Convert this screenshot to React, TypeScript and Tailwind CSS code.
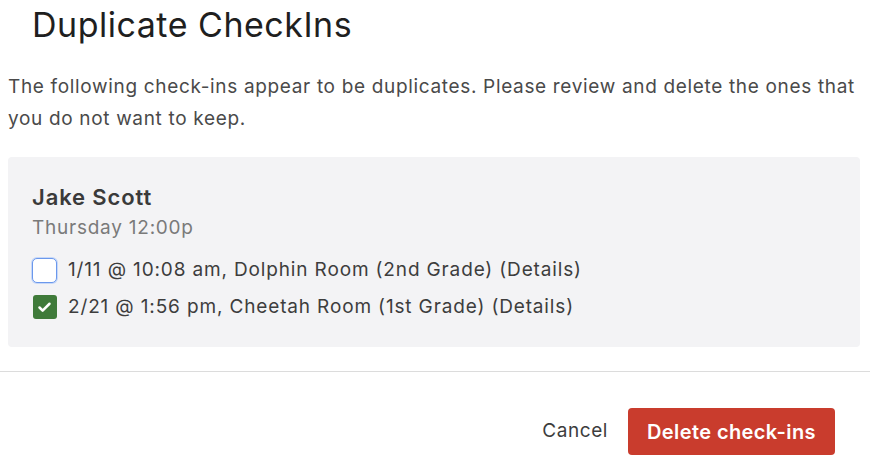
import { Check } from 'lucide-react';

const CHECKINS = [
  { id: 1, label: '1/11 @ 10:08 am, Dolphin Room (2nd Grade) (Details)', checked: false },
  { id: 2, label: '2/21 @ 1:56 pm, Cheetah Room (1st Grade) (Details)', checked: true },
];

export default function App() {
  return (
    <div className="h-[466px] w-[870px] overflow-hidden bg-white font-['Inter',sans-serif] text-[#333]">
      <h1 className="pl-[32px] pt-[4px] text-[34px] leading-[42px] tracking-[0.015em] text-[#1f1f1f]">
        Duplicate CheckIns
      </h1>

      <p className="mt-[25px] px-2 text-[19px] leading-8 tracking-[0.035em] text-[#4a4a4a]">
        The following check-ins appear to be duplicates. Please review and delete the ones that you do not want to keep.
      </p>

      <div className="ml-2 mr-[10px] mt-[22px] h-[190px] rounded bg-[#f3f3f5] pl-6 pt-[26px]">
        <div className="text-[22px] font-semibold leading-7 tracking-[0.04em] text-[#3a3a3a]">Jake Scott</div>
        <div className="mt-[3px] text-[19px] leading-7 tracking-[0.04em] text-[#7a7a7a]">Thursday 12:00p</div>
        <div className="mt-[15px] flex flex-col gap-[11px]">
          {CHECKINS.map((c) => (
            <label
              key={c.id}
              className="flex h-[26px] items-center gap-[11px] text-[19px] tracking-[0.045em] text-[#3d3d3d]"
            >
              <span className="flex w-[25px] justify-center">
                {c.checked ? (
                  <span className="flex h-[24px] w-[24px] items-center justify-center rounded-[3px] bg-[#3f7a3a]">
                    <Check className="h-[15px] w-[15px] text-white" strokeWidth={4} />
                  </span>
                ) : (
                  <span className="h-[25px] w-[25px] rounded-[5px] border border-[#6b98ec] bg-white ring-1 ring-[#c7d8f8]" />
                )}
              </span>
              {c.label}
            </label>
          ))}
        </div>
      </div>

      <div className="mt-[24px] border-t border-[#dcdcdc]" />

      <div className="flex items-center justify-end gap-[20px] pr-[35px] pt-[36px]">
        <button type="button" className="text-[19px] tracking-[0.03em] text-[#3d3d3d]">
          Cancel
        </button>
        <button
          type="button"
          className="h-[47px] w-[207px] rounded bg-[#c93c2d] text-[20px] font-semibold tracking-[0.02em] text-white"
        >
          Delete check-ins
        </button>
      </div>
    </div>
  );
}
